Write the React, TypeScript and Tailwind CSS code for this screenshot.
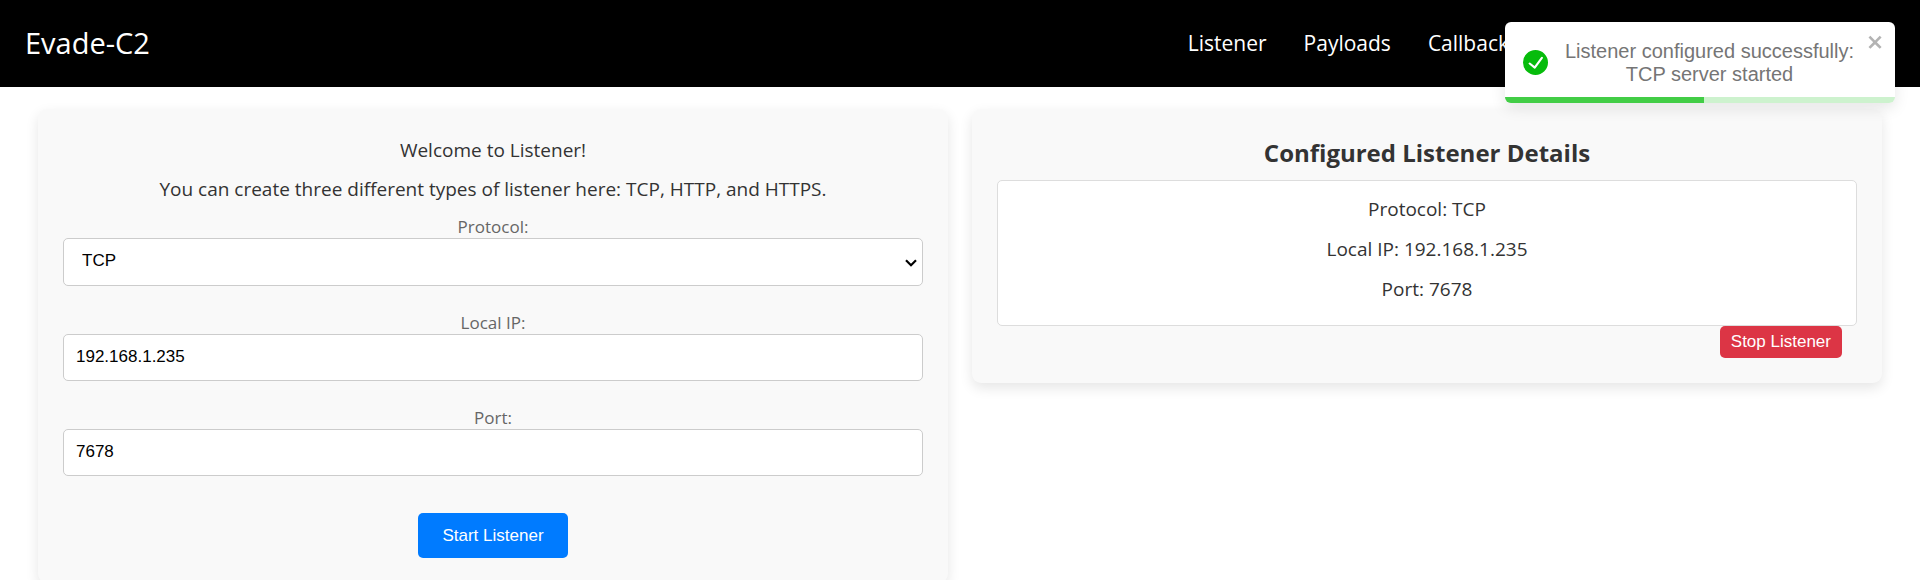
import { useState } from "react";

const navLinks = ["Listener", "Payloads", "Callbacks"];

const details = [
  ["Protocol", "TCP"],
  ["Local IP", "192.168.1.235"],
  ["Port", "7678"],
];

const card = "flex-1 rounded-[9px] bg-[#f9f9f9] px-[25px] shadow-[0_5px_13px_rgba(0,0,0,0.1)]";
const label = "text-[17px] leading-[22px] text-[#666]";
const field =
  "block w-full rounded-[5px] border border-[#ccc] bg-white pb-[2px] font-['Liberation_Sans',Arial,sans-serif] text-[17px] text-black";

function Header() {
  return (
    <header className="flex h-[87px] items-center justify-between bg-black px-[25px] pb-[2px] text-white">
      <a href="#" className="text-[29px] leading-[38px]">
        Evade-C2
      </a>
      <nav className="flex gap-[37px] pr-[376px] text-[21px] leading-[30px]">
        {navLinks.map((name) => (
          <a key={name} href="#">
            {name}
          </a>
        ))}
      </nav>
    </header>
  );
}

function ListenerForm() {
  const [protocol, setProtocol] = useState("TCP");
  const [ip, setIp] = useState("192.168.1.235");
  const [port, setPort] = useState("7678");

  return (
    <section className={`${card} pt-[28px] pb-[25px]`}>
      <p className="mb-[12px] leading-[27px]">Welcome to Listener!</p>
      <p className="mb-[13px] leading-[27px]">
        You can create three different types of listener here: TCP, HTTP, and HTTPS.
      </p>
      <form className="flex flex-col items-center" onSubmit={(e) => e.preventDefault()}>
        <label htmlFor="protocol" className={label}>
          Protocol:
        </label>
        <div className="relative mb-[26px] w-full">
          <select
            id="protocol"
            value={protocol}
            onChange={(e) => setProtocol(e.target.value)}
            className={`${field} h-[48px] appearance-none px-[18px]`}
          >
            <option>TCP</option>
            <option>HTTP</option>
            <option>HTTPS</option>
          </select>
          <svg
            viewBox="0 0 12 8"
            className="pointer-events-none absolute top-[21px] right-[6px] h-[8px] w-[12px]"
            fill="none"
            stroke="#000"
            strokeWidth="2.2"
          >
            <path d="M1 1.2l5 5 5-5" />
          </svg>
        </div>
        <label htmlFor="ip" className={label}>
          Local IP:
        </label>
        <input
          id="ip"
          value={ip}
          onChange={(e) => setIp(e.target.value)}
          className={`${field} mb-[26px] h-[47px] px-[12px]`}
        />
        <label htmlFor="port" className={label}>
          Port:
        </label>
        <input
          id="port"
          value={port}
          onChange={(e) => setPort(e.target.value)}
          className={`${field} mb-[37px] h-[47px] px-[12px]`}
        />
        <button
          type="submit"
          className="h-[45px] rounded-[5px] bg-[#007bff] px-[24px] font-['Liberation_Sans',Arial,sans-serif] text-[17px] text-white"
        >
          Start Listener
        </button>
      </form>
    </section>
  );
}

function ListenerDetails() {
  return (
    <section className={`${card} py-[25px]`}>
      <h2 className="mb-[8px] text-[24px] leading-[38px] font-bold">
        Configured Listener Details
      </h2>
      <div className="flex flex-col gap-[12px] rounded-[5px] border border-[#ddd] bg-white px-[12px] pt-[14px] pb-[22px]">
        {details.map(([name, value]) => (
          <p key={name} className="leading-[28px]">
            {name}: {value}
          </p>
        ))}
      </div>
      <div className="flex justify-end pr-[15px]">
        <button
          type="button"
          className="h-[32px] rounded-[5px] bg-[#dc3545] px-[11px] font-['Liberation_Sans',Arial,sans-serif] text-[17px] text-white"
        >
          Stop Listener
        </button>
      </div>
    </section>
  );
}

function Toast() {
  return (
    <div
      role="alert"
      className="absolute top-[22px] right-[25px] w-[390px] overflow-hidden rounded-[6px] bg-white font-['Liberation_Sans',Arial,sans-serif] text-[20px] leading-[23px] text-[#757575] shadow-[0_5px_15px_rgba(0,0,0,0.1)]"
    >
      <div className="flex h-[75px] items-center pl-[18px]">
        <svg viewBox="0 0 24 24" className="mt-[6px] size-[25px] shrink-0" fill="#07bc0c">
          <path d="M12 0a12 12 0 1012 12A12.014 12.014 0 0012 0zm6.927 8.2l-6.845 9.289a1.011 1.011 0 01-1.43.188l-4.888-3.908a1 1 0 111.25-1.562l4.076 3.261 6.227-8.451a1 1 0 111.61 1.183z" />
        </svg>
        <p className="mt-[6px] w-[323px] shrink-0 text-center">
          Listener configured successfully:
          <br />
          TCP server started
        </p>
        <button type="button" aria-label="close" className="mt-[10px] -ml-[4px] self-start">
          <svg viewBox="0 0 14 16" className="h-[20px] w-[18px]" fill="#b3b3b3">
            <path
              fillRule="evenodd"
              d="M7.71 8.23l3.75 3.75-1.48 1.48-3.75-3.75-3.75 3.75L1 11.98l3.75-3.75L1 4.48 2.48 3l3.75 3.75L9.98 3l1.48 1.48-3.75 3.75z"
            />
          </svg>
        </button>
      </div>
      <div className="h-[6px] bg-[#cdf2ce]">
        <div className="h-full w-[51%] bg-[#42cd46]" />
      </div>
    </div>
  );
}

export default function App() {
  return (
    <div className="relative bg-white text-center font-['Segoe_UI','Open_Sans',sans-serif] text-[19px] text-[#333]">
      <Header />
      <main className="flex items-start gap-[24px] px-[38px] pt-[22px]">
        <ListenerForm />
        <ListenerDetails />
      </main>
      <Toast />
    </div>
  );
}
